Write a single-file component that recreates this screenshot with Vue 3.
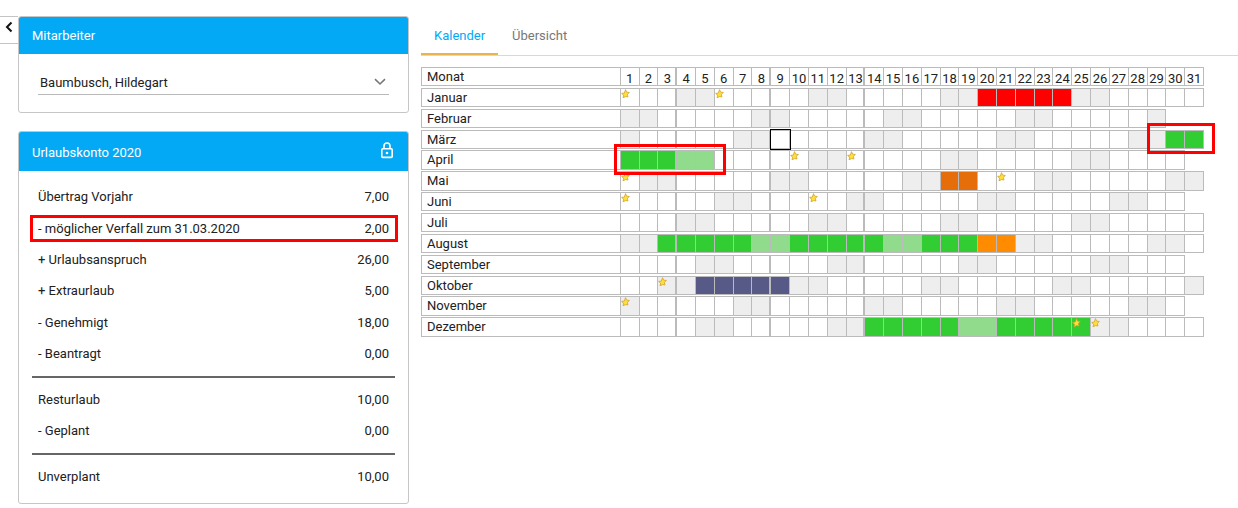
<script setup>
const monthNames = ['Januar','Februar','März','April','Mai','Juni','Juli','August','September','Oktober','November','Dezember']
const ranges = {
  0: [[20,24,'red']],
  2: [[30,31,'green'],[9,9,'today']],
  3: [[1,3,'green'],[4,5,'light']],
  4: [[18,19,'dark-orange']],
  7: [[3,7,'green'],[8,9,'light'],[10,14,'green'],[15,16,'light'],[17,19,'green'],[20,21,'orange']],
  9: [[5,9,'blue']],
  11: [[14,18,'green'],[19,20,'light'],[21,25,'green']]
}
const stars = { 0:[1,6], 3:[10,13], 4:[1,21], 5:[1,11], 9:[3], 10:[1], 11:[25,26] }
const days = Array.from({ length: 31 }, (_, i) => i + 1)
const thick = [4, 9, 14]
const months = monthNames.map((name, m) => {
  const count = new Date(2020, m + 1, 0).getDate()
  const cells = []
  for (let d = 1; d <= count; d++) {
    const wd = new Date(2020, m, d).getDay()
    let kind = wd === 0 || wd === 6 ? 'weekend' : ''
    for (const [a, b, k] of ranges[m] || []) if (d >= a && d <= b) kind = k
    cells.push({ d, kind, star: (stars[m] || []).includes(d), thick: thick.includes(d) })
  }
  return { name, cells }
})
const rows1 = [
  ['Übertrag Vorjahr','7,00'],
  ['- möglicher Verfall zum 31.03.2020','2,00',true],
  ['+ Urlaubsanspruch','26,00'],
  ['+ Extraurlaub','5,00'],
  ['- Genehmigt','18,00'],
  ['- Beantragt','0,00']
]
const rows2 = [['Resturlaub','10,00'],['- Geplant','0,00']]
</script>

<template>
  <div class="page">
    <button class="collapse" aria-label="Einklappen">
      <svg width="8" height="12" viewBox="0 0 8 12"><path d="M6.5 1.5 2 6l4.5 4.5" fill="none" stroke="#111" stroke-width="2"/></svg>
    </button>
    <aside class="side">
      <section class="card first">
        <header class="head h1">Mitarbeiter</header>
        <div class="select-wrap">
          <div class="select">
            <span>Baumbusch, Hildegart</span>
            <svg width="12" height="8" viewBox="0 0 12 8"><path d="M1 1.200 6 6l5-4.800" fill="none" stroke="#777" stroke-width="1.6"/></svg>
          </div>
        </div>
      </section>
      <section class="card second">
        <header class="head h2">
          <span class="h2-title">Urlaubskonto 2020</span>
          <svg class="lock" width="14" height="17" viewBox="0 0 14 17">
            <path d="M4 6.500V4a3 3 0 0 1 6 0v2.500" fill="none" stroke="#fff" stroke-width="1.6"/>
            <rect x="1.800" y="6.800" width="10.400" height="8.600" rx="1" fill="none" stroke="#fff" stroke-width="1.6"/>
            <circle cx="7" cy="11" r="1.300" fill="#fff"/>
          </svg>
        </header>
        <div class="body">
          <div v-for="r in rows1" :key="r[0]" class="row" :class="{ marked: r[2] }"><span>{{ r[0] }}</span><span>{{ r[1] }}</span></div>
          <hr class="rule rule-a" />
          <div v-for="r in rows2" :key="r[0]" class="row"><span>{{ r[0] }}</span><span>{{ r[1] }}</span></div>
          <hr class="rule rule-b" />
          <div class="row"><span>Unverplant</span><span>10,00</span></div>
        </div>
      </section>
    </aside>
    <main class="main">
      <nav class="tabs">
        <a class="tab active">Kalender</a>
        <a class="tab">Übersicht</a>
      </nav>
      <div class="calendar">
        <div class="cal-row header">
          <div class="label">Monat</div>
          <div v-for="d in days" :key="d" class="cell num" :class="{ thick: thick.includes(d) }">{{ d }}</div>
        </div>
        <div v-for="m in months" :key="m.name" class="cal-row">
          <div class="label">{{ m.name }}</div>
          <div v-for="c in m.cells" :key="c.d" class="cell" :class="[c.kind, { thick: c.thick }]">
            <svg v-if="c.star" class="star" width="9" height="9" viewBox="0 0 10 10">
              <path d="M5 .7 6.300 3.500l3 .4-2.200 2 .6 3L5 8.400 2.300 9.900l.6-3-2.200-2 3-.4z" fill="#ffdf3c" stroke="#d2a32a" stroke-width=".9"/>
            </svg>
          </div>
        </div>
        <div class="mark mark-april"></div>
        <div class="mark mark-march"></div>
      </div>
    </main>
  </div>
</template>

<style scoped>
.page {
  display: flex;
  width: 1238px;
  height: 508px;
  overflow: hidden;
  background: #fff;
  font-family: Roboto, "Liberation Sans", sans-serif;
  font-size: 13px;
  color: #212121;
}
.collapse {
  flex: none;
  width: 18px;
  height: 28px;
  margin-top: 16px;
  padding: 0 0 6px;
  background: #fff;
  border: 0;
  border-top: 1px solid #c4c4c4;
  border-bottom: 1px solid #c4c4c4;
  display: flex;
  align-items: center;
  justify-content: center;
}
.side {
  flex: none;
  width: 391px;
  padding-top: 16px;
}
.card {
  box-sizing: border-box;
  border: 1px solid #c6c6c6;
  border-radius: 3px;
  overflow: hidden;
  background: #fff;
}
.first { height: 97px; }
.second { height: 373px; margin-top: 18px; }
.head {
  background: #03a9f5;
  color: #fff;
  padding: 0 13px;
  display: flex;
  align-items: center;
  justify-content: space-between;
}
.h1 { height: 37px; }
.h2 { height: 39px; padding-right: 14px; }
.h2-title { padding-top: 2px; }
.lock { margin-bottom: 3px; }
.select-wrap { padding: 17px 19px 0; }
.select {
  box-sizing: border-box;
  height: 24px;
  border-bottom: 1px solid #b9b9b9;
  padding: 0 2px;
  display: flex;
  align-items: center;
  justify-content: space-between;
  color: #212121;
}
.select svg { margin-right: 1px; margin-bottom: 2px; }
.body { padding: 10px 13px 0; }
.row {
  position: relative;
  height: 31.400px;
  padding: 0 6px;
  display: flex;
  align-items: center;
  justify-content: space-between;
}
.marked::after {
  content: "";
  position: absolute;
  left: -2px;
  right: -3px;
  top: 2.700px;
  bottom: 1.700px;
  border: 3px solid #f00;
}
.rule {
  height: 2px;
  border: 0;
  margin: 0;
  background: #666;
}
.rule-a { margin: 6.500px 0 5.800px; }
.rule-b { margin: 7px 0 5.500px; }
.main {
  flex: 1;
  min-width: 0;
  margin-left: 12px;
}
.tabs {
  box-sizing: border-box;
  height: 40px;
  margin-top: 16px;
  border-bottom: 1px solid #d8d8d8;
  display: flex;
}
.tab {
  box-sizing: border-box;
  height: 39px;
  padding: 0 13px 0;
  margin-right: 1px;
  display: flex;
  align-items: center;
  color: #777;
}
.tab.active {
  color: #03a9f5;
  border-bottom: 2px solid #e9b44c;
  padding-top: 2px;
}
.calendar {
  position: relative;
  margin-top: 11px;
}
.cal-row {
  display: flex;
  height: 19.250px;
  margin-bottom: 1.620px;
}
.label {
  flex: none;
  width: 199.800px;
  box-sizing: border-box;
  border: 1px solid #bbb;
  border-right: 0;
  padding-left: 5px;
  line-height: 17px;
  font-size: 13px;
}
.cell {
  position: relative;
  flex: none;
  width: 18.820px;
  box-sizing: border-box;
  border: 1px solid #bbb;
  border-left: 0;
  box-shadow: -1px 0 0 #bbb;
}
.cell.thick { box-shadow: -2px 0 0 #bbb; }
.num {
  text-align: center;
  font-size: 13px;
  line-height: 22px;
}
.weekend { background: #eee; }
.green { background: #32cd32; }
.light { background: #90dc8c; }
.red { background: #f00; }
.orange { background: #ff8c00; }
.dark-orange { background: #e56d0a; }
.blue { background: #575a87; }
.today { box-shadow: none; outline: 1px solid #000; outline-offset: 0; z-index: 1; }
.star { position: absolute; left: 0; top: 0; }
.mark {
  position: absolute;
  box-sizing: border-box;
  border: 3px solid #f00;
  z-index: 2;
}
.mark-april { left: 193px; top: 77px; width: 112px; height: 31px; }
.mark-march { left: 726px; top: 56px; width: 68px; height: 31px; }
</style>
